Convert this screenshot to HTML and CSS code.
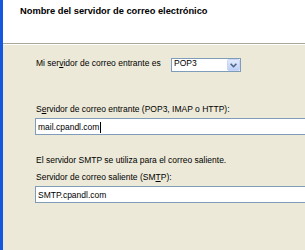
FILE: index.html
```html
<!DOCTYPE html>
<html>
<head>
<meta charset="utf-8">
<link rel="stylesheet" href="styles.css">
</head>
<body>
<div class="window">
  <div class="header">
    <div class="title">Nombre del servidor de correo electrónico</div>
  </div>
  <div class="content">
    <div class="row">
      <div class="label row-label">Mi ser<u>v</u>idor de correo entrante es</div>
      <div class="select">
        <span class="select-text">POP3</span>
        <span class="select-btn">
          <svg width="7" height="5" viewBox="0 0 7 5"><path d="M0.6 0.8 L3.5 3.7 L6.4 0.8" fill="none" stroke="#4d6185" stroke-width="1.6"/></svg>
        </span>
      </div>
    </div>
    <div class="label l2">S<u>e</u>rvidor de correo entrante (POP3, IMAP o HTTP):</div>
    <div class="input">mail.cpandl.com<span class="caret"></span></div>
    <div class="label l3">El servidor SMTP se utiliza para el correo saliente.</div>
    <div class="label l4">Servidor de correo saliente (SM<u>T</u>P):</div>
    <div class="input">SMTP.cpandl.com</div>
  </div>
</div>
</body>
</html>
```

FILE: styles.css
```css
html, body {
  margin: 0;
  padding: 0;
}
body {
  width: 305px;
  height: 250px;
  overflow: hidden;
  background: #ece9d8;
  font-family: "Liberation Sans", Arial, sans-serif;
  color: #000;
}
.window {
  height: 250px;
  border-left: 3px solid #1458e0;
  background: #ece9d8;
  box-sizing: border-box;
}
.header {
  height: 43px;
  background: #fff;
  border-bottom: 1px solid #aca899;
  box-shadow: 0 1px 0 #fff;
  box-sizing: content-box;
}
.title {
  padding: 6px 0 0 17px;
  font-size: 9.3px;
  line-height: 11px;
  font-weight: bold;
}
.content {
  padding-left: 33px;
  padding-top: 14px;
  font-size: 8.5px;
}
.label {
  line-height: 11px;
  white-space: nowrap;
}
.row {
  display: flex;
  align-items: baseline;
}
.row-label {
  flex: 0 0 135px;
}
.select {
  width: 70px;
  height: 14px;
  box-sizing: border-box;
  border: 1px solid #7f9db9;
  background: #fff;
  display: flex;
  align-items: baseline;
  position: relative;
}
.select-text {
  line-height: 9px;
  padding-left: 2px;
}
.select-btn {
  position: absolute;
  right: 0;
  top: 0;
  width: 13px;
  height: 12px;
  box-sizing: border-box;
  border-radius: 2px;
  background: linear-gradient(#e3ebfd, #bccff7);
  border: 1px solid #c6d5f8;
  display: flex;
  align-items: center;
  justify-content: center;
}
.select-btn svg {
  display: block;
}
.l2 {
  margin-top: 32px;
}
.input {
  margin-top: 3px;
  margin-left: -1px;
  height: 17px;
  box-sizing: border-box;
  border: 1px solid #7f9db9;
  border-right: none;
  background: #fff;
  padding: 1px 0 0 2px;
  line-height: 12px;
  white-space: nowrap;
  display: flex;
  align-items: center;
}
.caret {
  display: inline-block;
  width: 1px;
  height: 11px;
  background: #000;
  margin-left: 1px;
}
.l3 {
  margin-top: 20px;
}
.l4 {
  margin-top: 6px;
}
```
